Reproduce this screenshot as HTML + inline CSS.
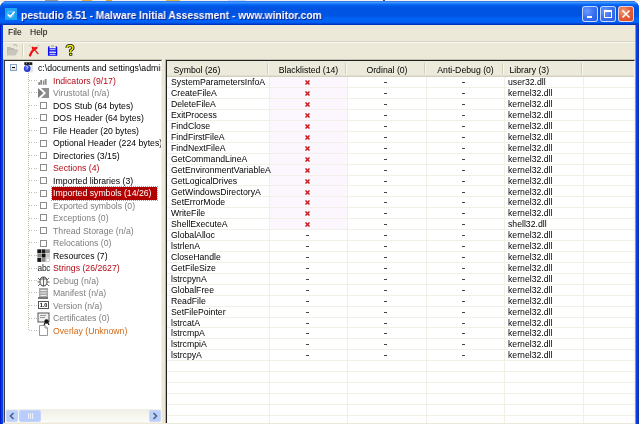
<!DOCTYPE html><html><head><meta charset="utf-8"><style>
*{margin:0;padding:0;box-sizing:border-box}
html,body{width:640px;height:424px;overflow:hidden;background:#fdfcf8}
body{position:relative;font-family:"Liberation Sans",sans-serif;font-size:8.7px;color:#000}
.a{position:absolute}
.w{will-change:transform}
.t{position:absolute;white-space:nowrap;line-height:12.5px;height:12.5px}
.g{color:#7d7d7d}
.r{color:#b40a14}
.o{color:#d46a18}
.lr{position:absolute;left:0;width:468px;height:11px;white-space:nowrap}
.c{position:absolute;top:0;line-height:11px;white-space:nowrap}
</style></head><body>
<div class="a" style="left:0;top:0;width:640px;height:2px;background:#f4efe2"></div>
<div class="a" style="left:45px;top:0;width:13px;height:1px;background:#9a9a9a"></div>
<div class="a" style="left:82px;top:0;width:10px;height:1px;background:#e8b040"></div>
<div class="a" style="left:106px;top:0;width:6px;height:1px;background:#e0a830"></div>
<div class="a" style="left:166px;top:0;width:14px;height:1px;background:#e8b848"></div>
<div class="a" style="left:228px;top:0;width:18px;height:1px;background:#c8daf8"></div>
<div class="a" style="left:383px;top:0;width:2px;height:1px;background:#3050a0"></div>
<div class="a" style="left:0;top:1px;width:639px;height:423px;background:#0040e8;border-radius:7px 7px 0 0"></div>
<div class="a" style="left:0;top:8px;width:1px;height:416px;background:#0018c8"></div>
<div class="a" style="left:638px;top:8px;width:1px;height:416px;background:#1830a8"></div>
<div class="a" style="left:0;top:1px;width:639px;height:24px;border-radius:7px 7px 0 0;background:linear-gradient(to bottom,#2a6ce8 0px,#3d95ff 1.5px,#2080ff 2.5px,#0a6af5 3.5px,#0060ee 4.5px,#0054e3 6px,#0054e3 15px,#0062f5 17px,#0062f5 21px,#0058eb 22px,#0038c8 23px,#0030b0 24px)"></div>
<div class="a" style="left:5px;top:8px;width:12px;height:12px;background:#1ea4f4"></div>
<svg class="a" style="left:5px;top:8px" width="12" height="12" viewBox="0 0 12 12"><path d="M3 6.5 L5.2 8.6 L9.6 3.6" stroke="#fff" stroke-width="1.6" fill="none"/><circle cx="5.6" cy="6.4" r="3.2" stroke="#cfeefe" stroke-width="0.6" fill="none" opacity="0.7"/></svg>
<div class="a w" style="left:21px;top:9px;font-weight:bold;font-size:10.6px;line-height:13px;color:#fff;text-shadow:1px 1px 0 #0a1e8c;white-space:nowrap;transform:scaleX(0.97);transform-origin:0 0">pestudio 8.51 - Malware Initial Assessment - www.winitor.com</div>
<div class="a" style="left:582px;top:6px;width:16px;height:16px;border:1px solid rgba(235,240,255,0.8);border-radius:3px;background:radial-gradient(circle at 30% 30%,#6a9cff 0,#3a70f0 50%,#2a5ee0 100%)"></div>
<div class="a" style="left:600px;top:6px;width:16px;height:16px;border:1px solid rgba(235,240,255,0.8);border-radius:3px;background:radial-gradient(circle at 30% 30%,#6a9cff 0,#3a70f0 50%,#2a5ee0 100%)"></div>
<div class="a" style="left:618px;top:6px;width:16px;height:16px;border:1px solid rgba(235,240,255,0.8);border-radius:3px;background:radial-gradient(circle at 30% 30%,#f0a080 0,#e5603a 45%,#d84a24 100%)"></div>
<div class="a" style="left:587px;top:16px;width:5px;height:2px;background:#fff"></div>
<div class="a" style="left:604px;top:10px;width:8px;height:8px;border:1px solid #fff;border-top-width:2px"></div>
<svg class="a" style="left:618px;top:6px" width="16" height="16" viewBox="0 0 16 16"><path d="M4.5 4.5 L11.5 11.5 M11.5 4.5 L4.5 11.5" stroke="#fff" stroke-width="1.6"/></svg>
<div class="a" style="left:3px;top:25px;width:632px;height:399px;background:#ece9d8"></div>
<div class="a w" style="left:8px;top:26px;font-size:8.5px;line-height:12px">File</div>
<div class="a w" style="left:30px;top:26px;font-size:8.5px;line-height:12px">Help</div>
<div class="a" style="left:3px;top:41px;width:632px;height:1px;background:#d6d4cc"></div>
<div class="a" style="left:3px;top:42px;width:632px;height:1px;background:#f8f7f2"></div>
<svg class="a" style="left:3px;top:42px" width="20" height="16" viewBox="0 0 20 16"><path d="M3.5 4.5 L7 4.5 L8 5.5 L11.5 5.5 L11.5 7 L15.5 7 L12.5 13.5 L3.5 13.5 Z" fill="#bdbbae" stroke="#fbfaf5" stroke-width="0.6"/><path d="M5.5 8 L15.5 8 L12.5 13.5 L3.5 13.5 Z" fill="#c8c6ba"/><path d="M10 3.2 Q12 1.8 14 3.5" stroke="#c2c0b4" stroke-width="1.1" fill="none"/><path d="M13.5 3 L14.5 5 L12.8 4.6 Z" fill="#c2c0b4"/></svg>
<div class="a" style="left:22px;top:44px;width:1px;height:13px;background:#d4d0bf"></div>
<div class="a" style="left:23px;top:44px;width:1px;height:13px;background:#fbfaf6"></div>
<svg class="a" style="left:26px;top:42px" width="16" height="16" viewBox="0 0 16 16"><path d="M3 4 L4.5 3" stroke="#b8b8b0" stroke-width="0.8"/><path d="M11 4 L13.5 3" stroke="#b8b8b0" stroke-width="0.8"/><path d="M6 6 Q9 8 12.3 12" stroke="#e81818" stroke-width="1.2" fill="none"/><path d="M10.5 5.8 Q6 8 4 13.5" stroke="#f01010" stroke-width="2.2" fill="none" stroke-linecap="round"/><path d="M6.5 5.5 L10 6.5" stroke="#f01010" stroke-width="1.8" stroke-linecap="round"/></svg>
<svg class="a" style="left:44px;top:42px" width="16" height="16" viewBox="0 0 16 16"><rect x="7" y="3" width="3" height="2" fill="#c4c2b6"/><path d="M5.5 4.6 Q4.6 4.6 4.6 5.6 L4.6 13 L12.6 13 L12.6 5.6 Q12.6 4.6 11.6 4.6" stroke="#0808f8" stroke-width="1.3" fill="none"/><rect x="4.6" y="6.3" width="8" height="3.6" fill="#1414f0"/><rect x="4.6" y="11" width="8" height="1.6" fill="#1414f0"/><rect x="5.6" y="7.2" width="6" height="1" fill="#c8d4ff"/><rect x="5.6" y="9.5" width="6" height="1" fill="#b8c4ff"/><rect x="5.6" y="11.8" width="6" height="1" fill="#c8d4ff"/></svg>
<svg class="a" style="left:62px;top:42px" width="16" height="16" viewBox="0 0 16 16"><path d="M5 6 Q5 3.5 8 3.5 Q11 3.5 11 5.8 Q11 7.5 8.6 8.5 L8.6 10.2" stroke="#111" stroke-width="3" fill="none"/><path d="M5 6 Q5 3.5 8 3.5 Q11 3.5 11 5.8 Q11 7.5 8.6 8.5 L8.6 10.2" stroke="#f0ec10" stroke-width="1.4" fill="none"/><rect x="7" y="11" width="3.4" height="2.8" rx="0.8" fill="#111"/><rect x="7.8" y="11.7" width="1.8" height="1.4" fill="#f0ec10"/></svg>
<div class="a" style="left:3px;top:59px;width:159px;height:364px;border-left:1px solid #a0a0a0;border-top:1px solid #c8c4b4"></div>
<div class="a" style="left:4px;top:60px;width:158px;height:363px;background:#fff;border-left:1px solid #404040;border-top:1px solid #303030;border-right:1px solid #f4f2ea;border-bottom:1px solid #f4f2ea;overflow:hidden;will-change:transform">
<div class="a" style="left:23px;top:12px;width:1px;height:257px;background:repeating-linear-gradient(to bottom,#c6c0a8 0 1px,transparent 1px 2px)"></div>
<div class="a" style="left:5px;top:3px;width:7px;height:7px;border:1px solid #8aa4c8;background:linear-gradient(#fff,#e4e0d4)"></div>
<div class="a" style="left:7px;top:6px;width:3px;height:1px;background:#000"></div>
<svg class="a" style="left:17px;top:-1px" width="14" height="14" viewBox="0 0 14 14"><rect x="6.5" y="4.5" width="4.5" height="8" fill="#e6e6e6"/><rect x="2.3" y="2.3" width="8" height="2.6" fill="#111"/><rect x="4" y="3" width="1" height="1" fill="#888"/><rect x="7" y="3" width="1" height="1" fill="#666"/><ellipse cx="5.2" cy="8.5" rx="3.3" ry="3.6" fill="#2438d0"/><ellipse cx="4.6" cy="8" rx="2" ry="2.4" fill="#3a5ae8"/><path d="M3.6 7 Q4.6 5.6 5.8 6.6 Q6.2 7.6 5 8.6 L5 9.4" stroke="#e8ecff" stroke-width="0.9" fill="none"/></svg>
<div class="t" style="left:33px;top:1.25px">c:\documents and settings\administrator\desktop\sample.exe</div>
<div class="a" style="left:24px;top:19px;width:8px;height:1px;background:repeating-linear-gradient(to right,#c4bea8 0 1px,transparent 1px 2.5px)"></div>
<svg class="a" style="left:32px;top:13.0px" width="12" height="12" viewBox="0 0 12 12"><rect x="1.5" y="8.2" width="1.2" height="2.6" fill="#444"/><rect x="3.5" y="6" width="1.2" height="4.8" fill="#555"/><rect x="5.8" y="6.5" width="1.6" height="4.3" fill="#8a8a8a"/><rect x="7.8" y="5" width="1.8" height="5.8" fill="#8a8a8a"/></svg>
<div class="t r" style="left:48px;top:13.75px">Indicators (9/17)</div>
<div class="a" style="left:24px;top:31px;width:8px;height:1px;background:repeating-linear-gradient(to right,#c4bea8 0 1px,transparent 1px 2.5px)"></div>
<svg class="a" style="left:32px;top:25.5px" width="12" height="12" viewBox="0 0 12 12"><path d="M1 1 L6.5 6 L1 11 Z" fill="#7d7d7d"/><path d="M4 1 L12 1 L12 11 L4 11 L9 6 Z" fill="#8e8e8e"/></svg>
<div class="t g" style="left:48px;top:26.25px">Virustotal (n/a)</div>
<div class="a" style="left:24px;top:44px;width:8px;height:1px;background:repeating-linear-gradient(to right,#c4bea8 0 1px,transparent 1px 2.5px)"></div>
<div class="a" style="left:35px;top:41px;width:7px;height:7px;border:1px solid #8c8c8c"></div>
<div class="t " style="left:48px;top:38.75px">DOS Stub (64 bytes)</div>
<div class="a" style="left:24px;top:57px;width:8px;height:1px;background:repeating-linear-gradient(to right,#c4bea8 0 1px,transparent 1px 2.5px)"></div>
<div class="a" style="left:35px;top:53px;width:7px;height:7px;border:1px solid #8c8c8c"></div>
<div class="t " style="left:48px;top:51.25px">DOS Header (64 bytes)</div>
<div class="a" style="left:24px;top:69px;width:8px;height:1px;background:repeating-linear-gradient(to right,#c4bea8 0 1px,transparent 1px 2.5px)"></div>
<div class="a" style="left:35px;top:66px;width:7px;height:7px;border:1px solid #8c8c8c"></div>
<div class="t " style="left:48px;top:63.75px">File Header (20 bytes)</div>
<div class="a" style="left:24px;top:81px;width:8px;height:1px;background:repeating-linear-gradient(to right,#c4bea8 0 1px,transparent 1px 2.5px)"></div>
<div class="a" style="left:35px;top:79px;width:7px;height:7px;border:1px solid #8c8c8c"></div>
<div class="t " style="left:48px;top:76.25px">Optional Header (224 bytes)</div>
<div class="a" style="left:24px;top:94px;width:8px;height:1px;background:repeating-linear-gradient(to right,#c4bea8 0 1px,transparent 1px 2.5px)"></div>
<div class="a" style="left:35px;top:91px;width:7px;height:7px;border:1px solid #8c8c8c"></div>
<div class="t " style="left:48px;top:88.75px">Directories (3/15)</div>
<div class="a" style="left:24px;top:107px;width:8px;height:1px;background:repeating-linear-gradient(to right,#c4bea8 0 1px,transparent 1px 2.5px)"></div>
<div class="a" style="left:35px;top:103px;width:7px;height:7px;border:1px solid #8c8c8c"></div>
<div class="t r" style="left:48px;top:101.25px">Sections (4)</div>
<div class="a" style="left:24px;top:119px;width:8px;height:1px;background:repeating-linear-gradient(to right,#c4bea8 0 1px,transparent 1px 2.5px)"></div>
<div class="a" style="left:35px;top:116px;width:7px;height:7px;border:1px solid #8c8c8c"></div>
<div class="t " style="left:48px;top:113.75px">Imported libraries (3)</div>
<div class="a" style="left:24px;top:131px;width:8px;height:1px;background:repeating-linear-gradient(to right,#c4bea8 0 1px,transparent 1px 2.5px)"></div>
<div class="a" style="left:35px;top:129px;width:7px;height:7px;border:1px solid #8c8c8c"></div>
<div class="a" style="left:47px;top:126.25px;width:105px;height:12.5px;background:#b00000;outline:1px dotted #4ac0c0;outline-offset:0"></div>
<div class="t" style="left:48px;top:126.25px;color:#fff">Imported symbols (14/26)</div>
<div class="a" style="left:24px;top:144px;width:8px;height:1px;background:repeating-linear-gradient(to right,#c4bea8 0 1px,transparent 1px 2.5px)"></div>
<div class="a" style="left:35px;top:141px;width:7px;height:7px;border:1px solid #8c8c8c"></div>
<div class="t g" style="left:48px;top:138.75px">Exported symbols (0)</div>
<div class="a" style="left:24px;top:157px;width:8px;height:1px;background:repeating-linear-gradient(to right,#c4bea8 0 1px,transparent 1px 2.5px)"></div>
<div class="a" style="left:35px;top:153px;width:7px;height:7px;border:1px solid #8c8c8c"></div>
<div class="t g" style="left:48px;top:151.25px">Exceptions (0)</div>
<div class="a" style="left:24px;top:169px;width:8px;height:1px;background:repeating-linear-gradient(to right,#c4bea8 0 1px,transparent 1px 2.5px)"></div>
<div class="a" style="left:35px;top:166px;width:7px;height:7px;border:1px solid #8c8c8c"></div>
<div class="t g" style="left:48px;top:163.75px">Thread Storage (n/a)</div>
<div class="a" style="left:24px;top:181px;width:8px;height:1px;background:repeating-linear-gradient(to right,#c4bea8 0 1px,transparent 1px 2.5px)"></div>
<div class="a" style="left:35px;top:179px;width:7px;height:7px;border:1px solid #8c8c8c"></div>
<div class="t g" style="left:48px;top:176.25px">Relocations (0)</div>
<div class="a" style="left:24px;top:194px;width:8px;height:1px;background:repeating-linear-gradient(to right,#c4bea8 0 1px,transparent 1px 2.5px)"></div>
<svg class="a" style="left:32px;top:188.0px" width="13" height="13" viewBox="0 0 12 12"><rect x="0.3" y="0.3" width="3.6" height="3.6" fill="#111"/><rect x="4.3" y="0.3" width="3.6" height="3.6" fill="#1a1a1a"/><rect x="8.3" y="0.3" width="3.6" height="3.6" fill="#8a8a8a"/><rect x="0.3" y="4.3" width="3.6" height="3.6" fill="#8a8a8a"/><rect x="4.3" y="4.3" width="3.6" height="3.6" fill="#111"/><rect x="8.3" y="4.3" width="3.6" height="3.6" fill="#c8c8c8"/><rect x="0.3" y="8.3" width="3.6" height="3.6" fill="#151515"/><rect x="4.3" y="8.3" width="3.6" height="3.6" fill="#8a8a8a"/><rect x="8.3" y="8.3" width="3.6" height="3.6" fill="#fff"/><rect x="8.5" y="8.5" width="3" height="3" fill="none" stroke="#bbb" stroke-width="0.6"/></svg>
<div class="t " style="left:48px;top:188.75px">Resources (7)</div>
<div class="a" style="left:24px;top:207px;width:8px;height:1px;background:repeating-linear-gradient(to right,#c4bea8 0 1px,transparent 1px 2.5px)"></div>
<div class="a" style="left:32.5px;top:201.0px;font-size:8.3px;line-height:12px;color:#222;letter-spacing:-0.2px">abc</div>
<div class="t r" style="left:48px;top:201.25px">Strings (26/2627)</div>
<div class="a" style="left:24px;top:219px;width:8px;height:1px;background:repeating-linear-gradient(to right,#c4bea8 0 1px,transparent 1px 2.5px)"></div>
<svg class="a" style="left:32px;top:213.0px" width="13" height="13" viewBox="0 0 13 13"><ellipse cx="6.5" cy="7.5" rx="3.5" ry="4.5" stroke="#444" stroke-width="1" fill="#f4f4f4"/><path d="M6.5 3 L6.5 12 M3 5 L10 5 M1 4 L3 6 M12 4 L10 6 M0.5 8 L3 8 M12.5 8 L10 8 M1 12 L3 10 M12 12 L10 10" stroke="#444" stroke-width="0.8" fill="none"/></svg>
<div class="t g" style="left:48px;top:213.75px">Debug (n/a)</div>
<div class="a" style="left:24px;top:231px;width:8px;height:1px;background:repeating-linear-gradient(to right,#c4bea8 0 1px,transparent 1px 2.5px)"></div>
<svg class="a" style="left:32px;top:225.5px" width="13" height="13" viewBox="0 0 13 13"><rect x="2" y="1" width="9" height="11" fill="#a8a8a8"/><rect x="3.5" y="3" width="6" height="1" fill="#eee"/><rect x="3.5" y="5.5" width="6" height="1" fill="#eee"/><rect x="3.5" y="8" width="6" height="1" fill="#eee"/><rect x="1" y="10" width="10" height="2" fill="#777"/></svg>
<div class="t g" style="left:48px;top:226.25px">Manifest (n/a)</div>
<div class="a" style="left:24px;top:244px;width:8px;height:1px;background:repeating-linear-gradient(to right,#c4bea8 0 1px,transparent 1px 2.5px)"></div>
<div class="a" style="left:33px;top:240px;width:11px;height:8px;border:1px solid #555;font-size:5.5px;line-height:6px;text-align:center;font-weight:bold">1.0</div>
<div class="t g" style="left:48px;top:238.75px">Version (n/a)</div>
<div class="a" style="left:24px;top:257px;width:8px;height:1px;background:repeating-linear-gradient(to right,#c4bea8 0 1px,transparent 1px 2.5px)"></div>
<svg class="a" style="left:32px;top:250.5px" width="13" height="13" viewBox="0 0 13 13"><rect x="1" y="1" width="11" height="9" fill="#f0f0f0" stroke="#555" stroke-width="1"/><rect x="3" y="3" width="6" height="1" fill="#999"/><rect x="3" y="5" width="5" height="1" fill="#999"/><circle cx="9.5" cy="9.5" r="2.2" fill="#151515"/><path d="M8 11 L7 13 M11 11 L12 13" stroke="#151515" stroke-width="1.2"/></svg>
<div class="t g" style="left:48px;top:251.25px">Certificates (0)</div>
<div class="a" style="left:24px;top:269px;width:8px;height:1px;background:repeating-linear-gradient(to right,#c4bea8 0 1px,transparent 1px 2.5px)"></div>
<svg class="a" style="left:32px;top:263.0px" width="13" height="13" viewBox="0 0 13 13"><path d="M2.5 1.5 L8 1.5 L10.5 4 L10.5 11.5 L2.5 11.5 Z" fill="#fff" stroke="#999" stroke-width="1"/><path d="M8 1.5 L8 4 L10.5 4" fill="none" stroke="#999" stroke-width="1"/></svg>
<div class="t o" style="left:48px;top:263.75px">Overlay (Unknown)</div>
<div class="a" style="left:0;top:348px;width:157px;height:13px;background:linear-gradient(to bottom,#f0efe6,#fcfcf8)"></div>
<div class="a" style="left:1px;top:349px;width:12px;height:12px;border:1px solid #c8d6fb;border-radius:2px;background:#bcd0fc"></div>
<svg class="a" style="left:1px;top:349px" width="12" height="12"><path d="M7.5 3 L4.5 6 L7.5 9" stroke="#4d6185" stroke-width="1.6" fill="none"/></svg>
<div class="a" style="left:14px;top:349px;width:22px;height:12px;border:1px solid #c4d4fc;border-radius:2px;background:#b8cdfb"></div>
<div class="a" style="left:23px;top:352px;width:1px;height:6px;background:#eef2fe;box-shadow:2px 0 0 #eef2fe,4px 0 0 #eef2fe"></div>
<div class="a" style="left:144px;top:349px;width:12px;height:12px;border:1px solid #c8d6fb;border-radius:2px;background:#bcd0fc"></div>
<svg class="a" style="left:144px;top:349px" width="12" height="12"><path d="M4.5 3 L7.5 6 L4.5 9" stroke="#4d6185" stroke-width="1.6" fill="none"/></svg>
</div>
<div class="a" style="left:165px;top:59px;width:470px;height:364px;border-left:1px solid #b8b4a4;border-top:1px solid #c8c4b4"></div>
<div class="a" style="left:166px;top:60px;width:469px;height:363px;background:#fff;border-left:1px solid #202020;border-top:1px solid #202020;border-right:1px solid #f4f2ea;overflow:hidden;will-change:transform">
<div class="a" style="left:0;top:0;width:468px;height:16px;background:#ebeadb"></div>
<div class="a" style="left:0;top:14px;width:468px;height:1px;background:#e2dfd0"></div>
<div class="a" style="left:0;top:15px;width:468px;height:1px;background:#d4d0bf"></div>
<div class="a" style="left:100px;top:2px;width:1px;height:11px;background:#d2cebe"></div>
<div class="a" style="left:101px;top:2px;width:1px;height:11px;background:#f8f7f0"></div>
<div class="c" style="left:6.5px;top:3px;line-height:12px">Symbol (26)</div>
<div class="a" style="left:178px;top:2px;width:1px;height:11px;background:#d2cebe"></div>
<div class="a" style="left:179px;top:2px;width:1px;height:11px;background:#f8f7f0"></div>
<div class="c" style="left:102.5px;width:78px;top:3px;line-height:12px;text-align:center">Blacklisted (14)</div>
<div class="a" style="left:257px;top:2px;width:1px;height:11px;background:#d2cebe"></div>
<div class="a" style="left:258px;top:2px;width:1px;height:11px;background:#f8f7f0"></div>
<div class="c" style="left:180.5px;width:79px;top:3px;line-height:12px;text-align:center">Ordinal (0)</div>
<div class="a" style="left:335px;top:2px;width:1px;height:11px;background:#d2cebe"></div>
<div class="a" style="left:336px;top:2px;width:1px;height:11px;background:#f8f7f0"></div>
<div class="c" style="left:259.5px;width:78px;top:3px;line-height:12px;text-align:center">Anti-Debug (0)</div>
<div class="a" style="left:414px;top:2px;width:1px;height:11px;background:#d2cebe"></div>
<div class="a" style="left:415px;top:2px;width:1px;height:11px;background:#f8f7f0"></div>
<div class="c" style="left:342.5px;top:3px;line-height:12px">Library (3)</div>
<div class="a" style="left:103px;top:16px;width:78px;height:152px;background:#fcf6fe"></div>
<div class="a" style="left:102px;top:16px;width:1px;height:350px;background:#f1efe6"></div>
<div class="a" style="left:180px;top:16px;width:1px;height:350px;background:#f1efe6"></div>
<div class="a" style="left:259px;top:16px;width:1px;height:350px;background:#f1efe6"></div>
<div class="a" style="left:337px;top:16px;width:1px;height:350px;background:#f1efe6"></div>
<div class="a" style="left:416px;top:16px;width:1px;height:350px;background:#f1efe6"></div>
<div class="a" style="left:0;top:26px;width:468px;height:1px;background:#f1efe6"></div>
<div class="a" style="left:0;top:37px;width:468px;height:1px;background:#f1efe6"></div>
<div class="a" style="left:0;top:48px;width:468px;height:1px;background:#f1efe6"></div>
<div class="a" style="left:0;top:59px;width:468px;height:1px;background:#f1efe6"></div>
<div class="a" style="left:0;top:70px;width:468px;height:1px;background:#f1efe6"></div>
<div class="a" style="left:0;top:81px;width:468px;height:1px;background:#f1efe6"></div>
<div class="a" style="left:0;top:92px;width:468px;height:1px;background:#f1efe6"></div>
<div class="a" style="left:0;top:103px;width:468px;height:1px;background:#f1efe6"></div>
<div class="a" style="left:0;top:114px;width:468px;height:1px;background:#f1efe6"></div>
<div class="a" style="left:0;top:124px;width:468px;height:1px;background:#f1efe6"></div>
<div class="a" style="left:0;top:135px;width:468px;height:1px;background:#f1efe6"></div>
<div class="a" style="left:0;top:146px;width:468px;height:1px;background:#f1efe6"></div>
<div class="a" style="left:0;top:157px;width:468px;height:1px;background:#f1efe6"></div>
<div class="a" style="left:0;top:168px;width:468px;height:1px;background:#f1efe6"></div>
<div class="a" style="left:0;top:179px;width:468px;height:1px;background:#f1efe6"></div>
<div class="a" style="left:0;top:190px;width:468px;height:1px;background:#f1efe6"></div>
<div class="a" style="left:0;top:201px;width:468px;height:1px;background:#f1efe6"></div>
<div class="a" style="left:0;top:212px;width:468px;height:1px;background:#f1efe6"></div>
<div class="a" style="left:0;top:223px;width:468px;height:1px;background:#f1efe6"></div>
<div class="a" style="left:0;top:234px;width:468px;height:1px;background:#f1efe6"></div>
<div class="a" style="left:0;top:245px;width:468px;height:1px;background:#f1efe6"></div>
<div class="a" style="left:0;top:256px;width:468px;height:1px;background:#f1efe6"></div>
<div class="a" style="left:0;top:266px;width:468px;height:1px;background:#f1efe6"></div>
<div class="a" style="left:0;top:277px;width:468px;height:1px;background:#f1efe6"></div>
<div class="a" style="left:0;top:288px;width:468px;height:1px;background:#f1efe6"></div>
<div class="a" style="left:0;top:299px;width:468px;height:1px;background:#f1efe6"></div>
<div class="a" style="left:0;top:310px;width:468px;height:1px;background:#f1efe6"></div>
<div class="a" style="left:0;top:321px;width:468px;height:1px;background:#f1efe6"></div>
<div class="a" style="left:0;top:332px;width:468px;height:1px;background:#f1efe6"></div>
<div class="a" style="left:0;top:343px;width:468px;height:1px;background:#f1efe6"></div>
<div class="a" style="left:0;top:354px;width:468px;height:1px;background:#f1efe6"></div>
<div class="c" style="left:4px;top:16.3px">SystemParametersInfoA</div>
<svg class="a" style="left:138px;top:19px" width="5" height="5" viewBox="0 0 5 5"><path d="M0.5 0.5 L4.5 4.5 M4.5 0.5 L0.5 4.5" stroke="#c81818" stroke-width="1.5"/></svg>
<div class="a" style="left:217px;top:21px;width:3px;height:1px;background:#444"></div>
<div class="a" style="left:295px;top:21px;width:3px;height:1px;background:#444"></div>
<div class="c" style="left:341px;top:16.3px">user32.dll</div>
<div class="c" style="left:4px;top:27.22px">CreateFileA</div>
<svg class="a" style="left:138px;top:30px" width="5" height="5" viewBox="0 0 5 5"><path d="M0.5 0.5 L4.5 4.5 M4.5 0.5 L0.5 4.5" stroke="#c81818" stroke-width="1.5"/></svg>
<div class="a" style="left:217px;top:32px;width:3px;height:1px;background:#444"></div>
<div class="a" style="left:295px;top:32px;width:3px;height:1px;background:#444"></div>
<div class="c" style="left:341px;top:27.22px">kernel32.dll</div>
<div class="c" style="left:4px;top:38.14px">DeleteFileA</div>
<svg class="a" style="left:138px;top:41px" width="5" height="5" viewBox="0 0 5 5"><path d="M0.5 0.5 L4.5 4.5 M4.5 0.5 L0.5 4.5" stroke="#c81818" stroke-width="1.5"/></svg>
<div class="a" style="left:217px;top:43px;width:3px;height:1px;background:#444"></div>
<div class="a" style="left:295px;top:43px;width:3px;height:1px;background:#444"></div>
<div class="c" style="left:341px;top:38.14px">kernel32.dll</div>
<div class="c" style="left:4px;top:49.06px">ExitProcess</div>
<svg class="a" style="left:138px;top:52px" width="5" height="5" viewBox="0 0 5 5"><path d="M0.5 0.5 L4.5 4.5 M4.5 0.5 L0.5 4.5" stroke="#c81818" stroke-width="1.5"/></svg>
<div class="a" style="left:217px;top:54px;width:3px;height:1px;background:#444"></div>
<div class="a" style="left:295px;top:54px;width:3px;height:1px;background:#444"></div>
<div class="c" style="left:341px;top:49.06px">kernel32.dll</div>
<div class="c" style="left:4px;top:59.98px">FindClose</div>
<svg class="a" style="left:138px;top:63px" width="5" height="5" viewBox="0 0 5 5"><path d="M0.5 0.5 L4.5 4.5 M4.5 0.5 L0.5 4.5" stroke="#c81818" stroke-width="1.5"/></svg>
<div class="a" style="left:217px;top:65px;width:3px;height:1px;background:#444"></div>
<div class="a" style="left:295px;top:65px;width:3px;height:1px;background:#444"></div>
<div class="c" style="left:341px;top:59.98px">kernel32.dll</div>
<div class="c" style="left:4px;top:70.9px">FindFirstFileA</div>
<svg class="a" style="left:138px;top:74px" width="5" height="5" viewBox="0 0 5 5"><path d="M0.5 0.5 L4.5 4.5 M4.5 0.5 L0.5 4.5" stroke="#c81818" stroke-width="1.5"/></svg>
<div class="a" style="left:217px;top:76px;width:3px;height:1px;background:#444"></div>
<div class="a" style="left:295px;top:76px;width:3px;height:1px;background:#444"></div>
<div class="c" style="left:341px;top:70.9px">kernel32.dll</div>
<div class="c" style="left:4px;top:81.82px">FindNextFileA</div>
<svg class="a" style="left:138px;top:85px" width="5" height="5" viewBox="0 0 5 5"><path d="M0.5 0.5 L4.5 4.5 M4.5 0.5 L0.5 4.5" stroke="#c81818" stroke-width="1.5"/></svg>
<div class="a" style="left:217px;top:87px;width:3px;height:1px;background:#444"></div>
<div class="a" style="left:295px;top:87px;width:3px;height:1px;background:#444"></div>
<div class="c" style="left:341px;top:81.82px">kernel32.dll</div>
<div class="c" style="left:4px;top:92.74px">GetCommandLineA</div>
<svg class="a" style="left:138px;top:96px" width="5" height="5" viewBox="0 0 5 5"><path d="M0.5 0.5 L4.5 4.5 M4.5 0.5 L0.5 4.5" stroke="#c81818" stroke-width="1.5"/></svg>
<div class="a" style="left:217px;top:98px;width:3px;height:1px;background:#444"></div>
<div class="a" style="left:295px;top:98px;width:3px;height:1px;background:#444"></div>
<div class="c" style="left:341px;top:92.74px">kernel32.dll</div>
<div class="c" style="left:4px;top:103.66px">GetEnvironmentVariableA</div>
<svg class="a" style="left:138px;top:107px" width="5" height="5" viewBox="0 0 5 5"><path d="M0.5 0.5 L4.5 4.5 M4.5 0.5 L0.5 4.5" stroke="#c81818" stroke-width="1.5"/></svg>
<div class="a" style="left:217px;top:109px;width:3px;height:1px;background:#444"></div>
<div class="a" style="left:295px;top:109px;width:3px;height:1px;background:#444"></div>
<div class="c" style="left:341px;top:103.66px">kernel32.dll</div>
<div class="c" style="left:4px;top:114.58px">GetLogicalDrives</div>
<svg class="a" style="left:138px;top:118px" width="5" height="5" viewBox="0 0 5 5"><path d="M0.5 0.5 L4.5 4.5 M4.5 0.5 L0.5 4.5" stroke="#c81818" stroke-width="1.5"/></svg>
<div class="a" style="left:217px;top:120px;width:3px;height:1px;background:#444"></div>
<div class="a" style="left:295px;top:120px;width:3px;height:1px;background:#444"></div>
<div class="c" style="left:341px;top:114.58px">kernel32.dll</div>
<div class="c" style="left:4px;top:125.5px">GetWindowsDirectoryA</div>
<svg class="a" style="left:138px;top:129px" width="5" height="5" viewBox="0 0 5 5"><path d="M0.5 0.5 L4.5 4.5 M4.5 0.5 L0.5 4.5" stroke="#c81818" stroke-width="1.5"/></svg>
<div class="a" style="left:217px;top:131px;width:3px;height:1px;background:#444"></div>
<div class="a" style="left:295px;top:131px;width:3px;height:1px;background:#444"></div>
<div class="c" style="left:341px;top:125.5px">kernel32.dll</div>
<div class="c" style="left:4px;top:136.42px">SetErrorMode</div>
<svg class="a" style="left:138px;top:139px" width="5" height="5" viewBox="0 0 5 5"><path d="M0.5 0.5 L4.5 4.5 M4.5 0.5 L0.5 4.5" stroke="#c81818" stroke-width="1.5"/></svg>
<div class="a" style="left:217px;top:141px;width:3px;height:1px;background:#444"></div>
<div class="a" style="left:295px;top:141px;width:3px;height:1px;background:#444"></div>
<div class="c" style="left:341px;top:136.42px">kernel32.dll</div>
<div class="c" style="left:4px;top:147.34px">WriteFile</div>
<svg class="a" style="left:138px;top:150px" width="5" height="5" viewBox="0 0 5 5"><path d="M0.5 0.5 L4.5 4.5 M4.5 0.5 L0.5 4.5" stroke="#c81818" stroke-width="1.5"/></svg>
<div class="a" style="left:217px;top:152px;width:3px;height:1px;background:#444"></div>
<div class="a" style="left:295px;top:152px;width:3px;height:1px;background:#444"></div>
<div class="c" style="left:341px;top:147.34px">kernel32.dll</div>
<div class="c" style="left:4px;top:158.26px">ShellExecuteA</div>
<svg class="a" style="left:138px;top:161px" width="5" height="5" viewBox="0 0 5 5"><path d="M0.5 0.5 L4.5 4.5 M4.5 0.5 L0.5 4.5" stroke="#c81818" stroke-width="1.5"/></svg>
<div class="a" style="left:217px;top:163px;width:3px;height:1px;background:#444"></div>
<div class="a" style="left:295px;top:163px;width:3px;height:1px;background:#444"></div>
<div class="c" style="left:341px;top:158.26px">shell32.dll</div>
<div class="c" style="left:4px;top:169.18px">GlobalAlloc</div>
<div class="a" style="left:139px;top:174px;width:3px;height:1px;background:#444"></div>
<div class="a" style="left:217px;top:174px;width:3px;height:1px;background:#444"></div>
<div class="a" style="left:295px;top:174px;width:3px;height:1px;background:#444"></div>
<div class="c" style="left:341px;top:169.18px">kernel32.dll</div>
<div class="c" style="left:4px;top:180.1px">lstrlenA</div>
<div class="a" style="left:139px;top:185px;width:3px;height:1px;background:#444"></div>
<div class="a" style="left:217px;top:185px;width:3px;height:1px;background:#444"></div>
<div class="a" style="left:295px;top:185px;width:3px;height:1px;background:#444"></div>
<div class="c" style="left:341px;top:180.1px">kernel32.dll</div>
<div class="c" style="left:4px;top:191.02px">CloseHandle</div>
<div class="a" style="left:139px;top:196px;width:3px;height:1px;background:#444"></div>
<div class="a" style="left:217px;top:196px;width:3px;height:1px;background:#444"></div>
<div class="a" style="left:295px;top:196px;width:3px;height:1px;background:#444"></div>
<div class="c" style="left:341px;top:191.02px">kernel32.dll</div>
<div class="c" style="left:4px;top:201.94px">GetFileSize</div>
<div class="a" style="left:139px;top:207px;width:3px;height:1px;background:#444"></div>
<div class="a" style="left:217px;top:207px;width:3px;height:1px;background:#444"></div>
<div class="a" style="left:295px;top:207px;width:3px;height:1px;background:#444"></div>
<div class="c" style="left:341px;top:201.94px">kernel32.dll</div>
<div class="c" style="left:4px;top:212.86px">lstrcpynA</div>
<div class="a" style="left:139px;top:218px;width:3px;height:1px;background:#444"></div>
<div class="a" style="left:217px;top:218px;width:3px;height:1px;background:#444"></div>
<div class="a" style="left:295px;top:218px;width:3px;height:1px;background:#444"></div>
<div class="c" style="left:341px;top:212.86px">kernel32.dll</div>
<div class="c" style="left:4px;top:223.78px">GlobalFree</div>
<div class="a" style="left:139px;top:229px;width:3px;height:1px;background:#444"></div>
<div class="a" style="left:217px;top:229px;width:3px;height:1px;background:#444"></div>
<div class="a" style="left:295px;top:229px;width:3px;height:1px;background:#444"></div>
<div class="c" style="left:341px;top:223.78px">kernel32.dll</div>
<div class="c" style="left:4px;top:234.7px">ReadFile</div>
<div class="a" style="left:139px;top:240px;width:3px;height:1px;background:#444"></div>
<div class="a" style="left:217px;top:240px;width:3px;height:1px;background:#444"></div>
<div class="a" style="left:295px;top:240px;width:3px;height:1px;background:#444"></div>
<div class="c" style="left:341px;top:234.7px">kernel32.dll</div>
<div class="c" style="left:4px;top:245.62px">SetFilePointer</div>
<div class="a" style="left:139px;top:251px;width:3px;height:1px;background:#444"></div>
<div class="a" style="left:217px;top:251px;width:3px;height:1px;background:#444"></div>
<div class="a" style="left:295px;top:251px;width:3px;height:1px;background:#444"></div>
<div class="c" style="left:341px;top:245.62px">kernel32.dll</div>
<div class="c" style="left:4px;top:256.54px">lstrcatA</div>
<div class="a" style="left:139px;top:262px;width:3px;height:1px;background:#444"></div>
<div class="a" style="left:217px;top:262px;width:3px;height:1px;background:#444"></div>
<div class="a" style="left:295px;top:262px;width:3px;height:1px;background:#444"></div>
<div class="c" style="left:341px;top:256.54px">kernel32.dll</div>
<div class="c" style="left:4px;top:267.46px">lstrcmpA</div>
<div class="a" style="left:139px;top:272px;width:3px;height:1px;background:#444"></div>
<div class="a" style="left:217px;top:272px;width:3px;height:1px;background:#444"></div>
<div class="a" style="left:295px;top:272px;width:3px;height:1px;background:#444"></div>
<div class="c" style="left:341px;top:267.46px">kernel32.dll</div>
<div class="c" style="left:4px;top:278.38px">lstrcmpiA</div>
<div class="a" style="left:139px;top:283px;width:3px;height:1px;background:#444"></div>
<div class="a" style="left:217px;top:283px;width:3px;height:1px;background:#444"></div>
<div class="a" style="left:295px;top:283px;width:3px;height:1px;background:#444"></div>
<div class="c" style="left:341px;top:278.38px">kernel32.dll</div>
<div class="c" style="left:4px;top:289.3px">lstrcpyA</div>
<div class="a" style="left:139px;top:294px;width:3px;height:1px;background:#444"></div>
<div class="a" style="left:217px;top:294px;width:3px;height:1px;background:#444"></div>
<div class="a" style="left:295px;top:294px;width:3px;height:1px;background:#444"></div>
<div class="c" style="left:341px;top:289.3px">kernel32.dll</div>
</div>
<div class="a" style="left:635px;top:25px;width:1px;height:399px;background:#7896f0"></div>
</body></html>
